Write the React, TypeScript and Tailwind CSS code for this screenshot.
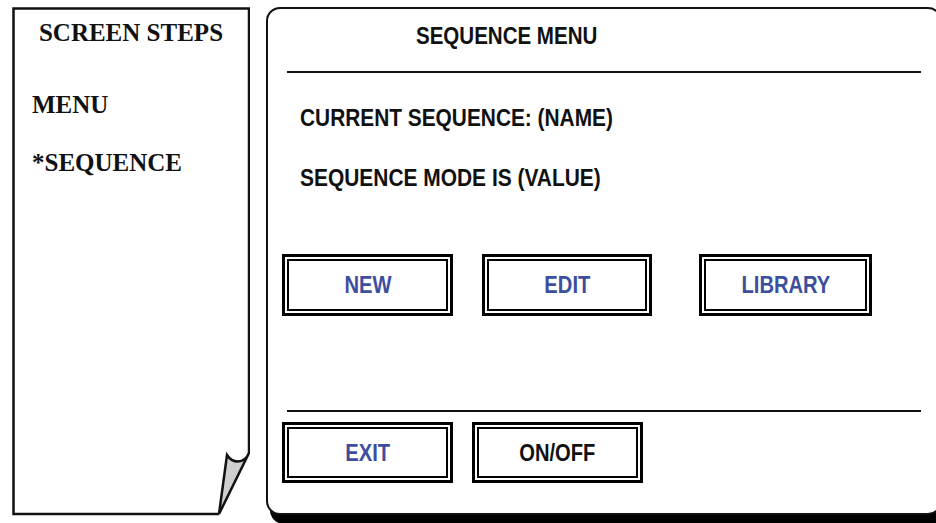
const sans = "font-['Liberation_Sans',Arial,sans-serif]"
const serif = "font-['Liberation_Serif','Times_New_Roman',serif]"

interface BtnProps {
  label: string
  w: string
  h: string
  blue?: boolean
  className?: string
}

function DoubleButton({ label, w, h, blue = true, className = '' }: BtnProps) {
  return (
    <div className={`${w} ${h} shrink-0 border-[3px] border-black p-[2px] bg-white ${className}`}>
      <div className="w-full h-full border-2 border-black flex items-center justify-center">
        <span
          className={`inline-block scale-x-[0.84] ${sans} text-[24px] leading-[24px] font-bold ${blue ? 'text-[#3d4e9e]' : 'text-[#111]'}`}
        >
          {label}
        </span>
      </div>
    </div>
  )
}

function StepsPanel() {
  return (
    <div className="relative w-[238px] h-[509px] shrink-0">
      {/* folded page outline */}
      <svg
        className="absolute inset-0"
        width="238"
        height="509"
        viewBox="0 0 238 509"
        fill="none"
      >
        <path
          d="M215 448 C220 456 232 458 237 446 L207 507 Z"
          fill="#cfcfcf"
        />
        <path
          d="M207 507 H1.5 V1.5 H237 V446 C232 458 220 456 215 448 L207 507 L237 446"
          stroke="#111"
          strokeWidth="2.5"
          strokeLinejoin="miter"
        />
      </svg>
      <div className={`relative flex flex-col ${serif} font-bold text-[#111]`}>
        <div className="mt-[13px] text-center text-[25px] leading-[25px]">SCREEN STEPS</div>
        <div className="mt-[47px] pl-[20px] text-[25px] leading-[25px]">MENU</div>
        <div className="mt-[33px] pl-[20px] text-[25px] leading-[25px]">*SEQUENCE</div>
      </div>
    </div>
  )
}

function SequenceMenu() {
  return (
    <div className="ml-[16px] w-[676px] h-[508px] shrink-0 border-2 border-[#111] rounded-[14px] bg-white shadow-[4px_9px_0_0_#000] flex flex-col">
      <div className={`mt-[15px] pl-[148px] ${sans} font-bold text-[24px] leading-[24px] text-[#111]`}>
        <span className="inline-block origin-left scale-x-[0.855]">SEQUENCE MENU</span>
      </div>
      <div className="mt-[23px] mx-[19px] h-[2px] bg-[#111]" />

      <div className={`mt-[34px] pl-[32px] ${sans} font-bold text-[23px] leading-[23px] text-[#111]`}>
        <span className="inline-block origin-left scale-x-[0.907]">CURRENT SEQUENCE: (NAME)</span>
      </div>
      <div className={`mt-[37px] pl-[32px] ${sans} font-bold text-[23px] leading-[23px] text-[#111]`}>
        <span className="inline-block origin-left scale-x-[0.91]">SEQUENCE MODE IS (VALUE)</span>
      </div>

      <div className="mt-[64px] pl-[14px] flex">
        <DoubleButton label="NEW" w="w-[171px]" h="h-[62px]" />
        <DoubleButton label="EDIT" w="w-[170px]" h="h-[62px]" className="ml-[29px]" />
        <DoubleButton label="LIBRARY" w="w-[173px]" h="h-[62px]" className="ml-[47px]" />
      </div>

      <div className="mt-[94px] mx-[19px] h-[2px] bg-[#111]" />

      <div className="mt-[10px] pl-[14px] flex">
        <DoubleButton label="EXIT" w="w-[171px]" h="h-[61px]" />
        <DoubleButton label="ON/OFF" w="w-[171px]" h="h-[61px]" blue={false} className="ml-[19px]" />
      </div>
    </div>
  )
}

export default function App() {
  return (
    <div className="w-[936px] h-[523px] overflow-hidden bg-white flex items-start pt-[7px] pl-[12px]">
      <StepsPanel />
      <SequenceMenu />
    </div>
  )
}
